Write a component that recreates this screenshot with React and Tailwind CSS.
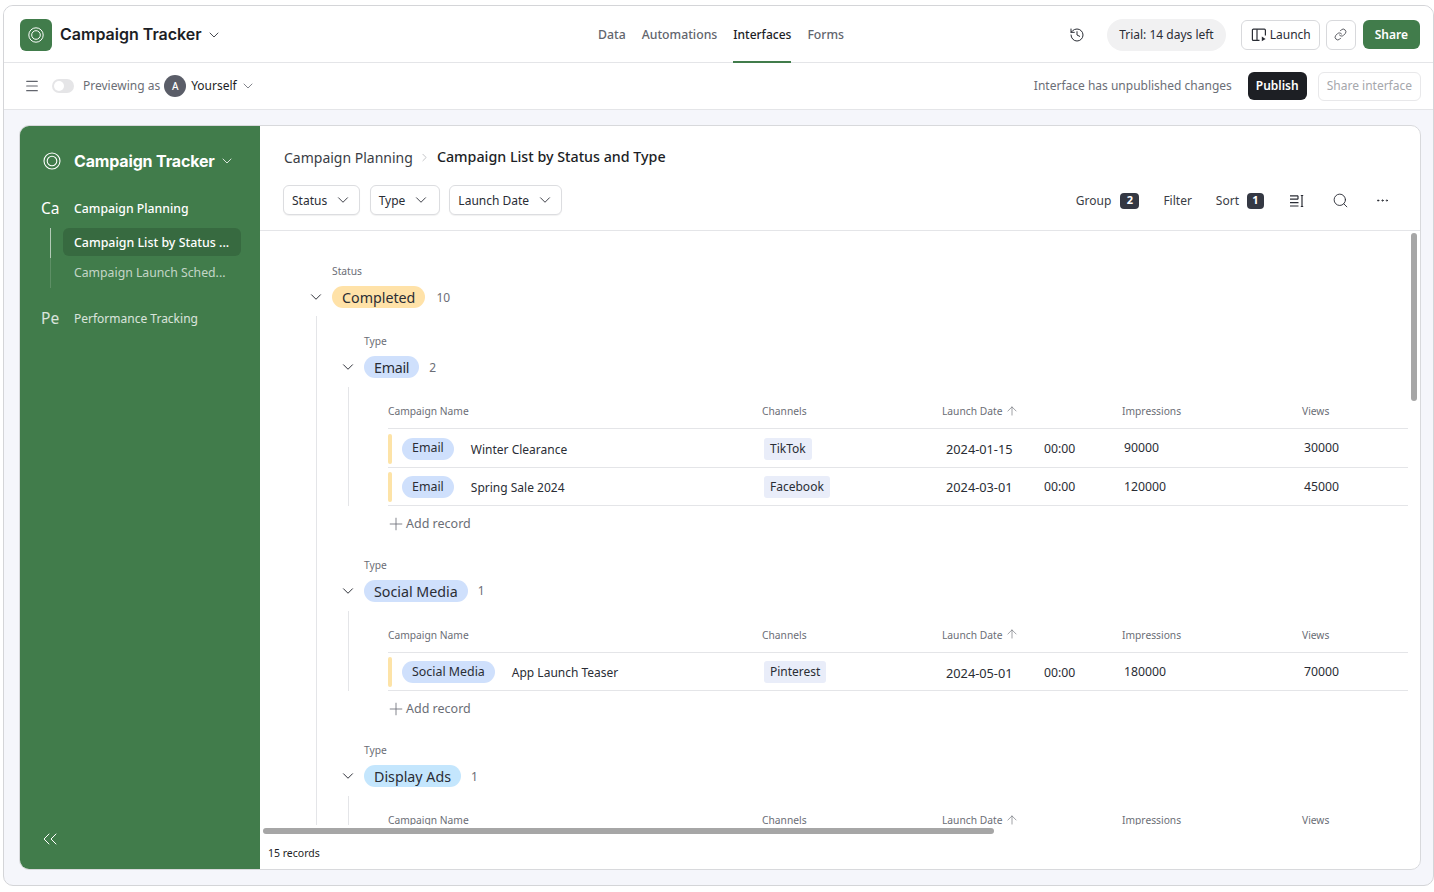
import React from 'react';
import { ChevronDown, ChevronRight, ChevronsLeft, History, Link, Menu, Search, Ellipsis, Plus, ArrowUp } from 'lucide-react';

const Logo = ({ size = 20 }) => (
  <svg width={size} height={size} viewBox="0 0 20 20" fill="none" stroke="currentColor" strokeWidth="1.1">
    <circle cx="10" cy="10" r="8" />
    <circle cx="10" cy="10" r="4.8" />
  </svg>
);

const LaunchIcon = () => (
  <svg width="16" height="16" viewBox="0 0 16 16" fill="none" stroke="currentColor" strokeWidth="1.2">
    <path d="M8.5 13.4H2.4a1 1 0 0 1-1-1V3.2a1 1 0 0 1 1-1h11a1 1 0 0 1 1 1v5.3" />
    <path d="M6 2.2v11.2" />
    <path d="M10.8 9.6l3.8 2.3-3.8 2.3z" fill="currentColor" stroke="none" />
  </svg>
);

const RowHeightIcon = () => (
  <svg width="15" height="14" viewBox="0 0 15 14" fill="none" stroke="currentColor" strokeWidth="1.2">
    <path d="M1 1.8h8M9 1.8v3.4M1 5.2h8M1 8.6h8.5M1 12h8.5" />
    <path d="M13 1.5v11M11.8 1.5h2.4M11.8 12.5h2.4" />
  </svg>
);

const FilterButton = ({ label, pad = 'pr-[7px]' }) => (
  <button className={`flex h-[30px] items-center gap-[7px] rounded-md border border-[#dcdde0] bg-white pl-2 text-[12px] text-[#2a2d35] shadow-[0_1px_1px_rgba(0,0,0,0.06)] ${pad}`}>
    <span className="pt-px">{label}</span>
    <ChevronDown size={18} strokeWidth={1.2} />
  </button>
);

const Row = ({ pill, name, channel, date, impressions, views }) => (
  <div className="flex h-[38.5px] items-center border-b border-[#e4e5e8] pt-[1.5px] text-[12px] text-[#2a2d35]">
    <div className="flex w-[374px] items-center">
      <span className="h-[30px] w-1 rounded-sm bg-[#fde3a7]" />
      <span className="ml-[10px] flex h-[22px] items-center rounded-full bg-[#cfe0fc] px-[10px] text-[12.4px]">{pill}</span>
      <span className="ml-[17px] mt-[2px]">{name}</span>
    </div>
    <div className="w-[180px] pl-[2px]">
      <span className="inline-flex h-[22px] items-center rounded-[3px] bg-[#e9edf9] px-[6px]">{channel}</span>
    </div>
    <div className="flex w-[180px] pl-1">
      <span className="mt-[2px] w-[98px] text-[12.75px]">{date}</span>
      <span className="mt-[2px] text-[12.25px]">00:00</span>
    </div>
    <div className="w-[180px] pl-[2px] text-[12.25px]">{impressions}</div>
    <div className="pl-[2px] text-[12.25px]">{views}</div>
  </div>
);

const TableHead = () => (
  <div className="flex h-[42px] items-center border-b border-[#e4e5e8] pt-[8px] text-[10.25px] text-[#6b6e76]">
    <div className="w-[374px]">Campaign Name</div>
    <div className="w-[180px]">Channels</div>
    <div className="flex w-[180px] items-center gap-[3px]">Launch Date <ArrowUp size={14} strokeWidth={1.1} className="-mt-[2px]" /></div>
    <div className="w-[180px]">Impressions</div>
    <div>Views</div>
  </div>
);

const TypeGroup = ({ type, count, color, rows }) => (
  <section>
    <div className="h-[14px] pl-[47px] text-[10.25px] leading-[14px] text-[#6b6e76]">Type</div>
    <div className="mt-2 flex h-[22px] items-center pl-[22px]">
      <ChevronDown size={18} strokeWidth={1.3} className="shrink-0 text-[#2a2d35]" />
      <span className={`ml-[7px] flex h-[22px] items-center rounded-full px-[10px] pt-px text-[14.25px] text-[#2a2d35] ${color}`}>{type}</span>
      <span className="ml-[10px] pt-px text-[12px] text-[#6b6e76]">{count}</span>
    </div>
    <div className="ml-[31px] mt-[9px] border-l border-[#e4e5e8] pl-[39px]">
      <TableHead />
      {rows.map((r) => <Row key={r.name} {...r} />)}
    </div>
    {rows.length > 0 && (
      <div className="ml-[69px] flex items-center pt-[8px] text-[12.5px] text-[#6b6e76]">
        <Plus size={20} strokeWidth={1} /> Add record
      </div>
    )}
  </section>
);

export default function App() {
  return (
    <div className="h-[892px] overflow-hidden bg-white pb-[6px] pl-[3px] pt-[5px] font-['Noto_Sans',sans-serif]">
      <div className="flex h-full flex-col overflow-hidden rounded-[10px] border border-[#d4d5d8] bg-[#f5f6fb]">
        <header className="relative flex h-[57px] shrink-0 items-center border-b border-[#e4e5e8] bg-white pl-4 pr-[13px] pt-px">
          <div className="flex h-8 w-8 items-center justify-center rounded-md bg-[#417c4b] text-white"><Logo size={18} /></div>
          <span className="ml-2 -mt-[2px] font-['Inter',sans-serif] text-[16px] font-semibold text-[#1c1e25]">Campaign Tracker</span>
          <ChevronDown size={16} strokeWidth={1.3} className="ml-[4px] text-[#2a2d35]" />
          <nav className="absolute left-[594px] top-0 flex h-[57px] items-center gap-4 pt-px text-[12.25px] font-medium text-[#62656d]">
            <span>Data</span>
            <span>Automations</span>
            <span className="flex h-full items-center border-b-2 border-[#417c4b] pt-[2px] text-[12px] text-[#1c1e25]">Interfaces</span>
            <span>Forms</span>
          </nav>
          <div className="ml-auto flex items-center">
            <History size={16} strokeWidth={1.5} className="text-[#2a2d35]" />
            <span className="ml-[22px] flex h-8 items-center rounded-full bg-[#f1f1f2] px-3 text-[12px] text-[#2a2d35]">Trial: 14 days left</span>
            <button className="ml-[15px] flex h-[30px] items-center gap-[3px] rounded-md border border-[#d8d9dc] bg-white pl-[9px] pr-[8px] text-[12px] text-[#2a2d35]"><LaunchIcon /> Launch</button>
            <button className="ml-[6px] flex h-[30px] w-[30px] items-center justify-center rounded-md border border-[#d8d9dc] bg-white text-[#2a2d35]"><Link size={13} strokeWidth={1.4} /></button>
            <button className="ml-[7px] flex h-[29px] items-center rounded-md bg-[#417c4b] px-3 text-[12px] font-semibold text-white">Share</button>
          </div>
        </header>

        <div className="flex h-[47px] shrink-0 items-center border-b border-[#e4e5e8] bg-white pl-5 pr-[12px]">
          <Menu size={16} strokeWidth={1.7} className="text-[#62656d]" />
          <span className="ml-3 flex h-[14px] w-[22px] items-center rounded-full bg-[#e5e5e7] px-[2px]"><span className="h-[10px] w-[10px] rounded-full bg-white" /></span>
          <span className="ml-[9px] text-[12px] text-[#6b6e76]">Previewing as</span>
          <span className="ml-1 flex h-[22px] w-[22px] items-center justify-center rounded-full bg-[#5a5d68] text-[10px] font-medium text-white">A</span>
          <span className="ml-[5px] text-[12px] text-[#1c1e25]">Yourself</span>
          <ChevronDown size={16} strokeWidth={1.2} className="ml-[3px] text-[#62656d]" />
          <span className="ml-auto text-[12px] text-[#6b6e76]">Interface has unpublished changes</span>
          <button className="ml-4 flex h-7 items-center rounded-md bg-[#1d1f24] px-2 text-[12px] font-semibold text-white">Publish</button>
          <button className="ml-[11px] flex h-[29px] items-center rounded-md border border-[#e8e8ea] bg-white px-2 text-[12px] text-[#a5a7ac]">Share interface</button>
        </div>

        <div className="min-h-0 flex-1 pb-[15px] pl-[15px] pr-[12px] pt-[15px]">
          <div className="flex h-full overflow-hidden rounded-[10px] border border-[#d8d9dc] bg-white">
            <aside className="flex w-[240px] shrink-0 flex-col bg-[#417c4b] text-white">
              <div className="mt-[18px] flex h-[34px] items-center pl-[22px]">
                <Logo size={20} />
                <span className="ml-[12px] font-['Inter',sans-serif] text-[16px] font-bold tracking-[-0.01em]">Campaign Tracker</span>
                <ChevronDown size={16} strokeWidth={1.2} className="ml-[4px]" />
              </div>
              <div className="mt-[15px] flex h-[30px] items-center">
                <span className="w-[54px] pl-[21px] pt-[2px] text-[15.5px]">Ca</span>
                <span className="pt-[2px] text-[12.25px] font-medium">Campaign Planning</span>
              </div>
              <div className="ml-[30px] mt-[5px] flex flex-col">
                <div className="flex h-[30px] items-center border-l border-white/60 pl-[12px]">
                  <span className="-mt-[2px] flex h-7 w-[178px] items-center rounded-md bg-[#376a40] pl-[11px] pt-[2px] text-[12.4px] font-medium">Campaign List by Status ...</span>
                </div>
                <div className="flex h-[30px] items-center border-l border-white/15 pl-[23px] text-[12.25px] text-white/70">Campaign Launch Sched...</div>
              </div>
              <div className="mt-[16px] flex h-[30px] items-center text-white/80">
                <span className="w-[54px] pl-[21px] text-[15.5px]">Pe</span>
                <span className="text-[12px]">Performance Tracking</span>
              </div>
              <ChevronsLeft size={24} strokeWidth={1} className="mb-[18px] ml-[18px] mt-auto" />
            </aside>

            <main className="relative flex min-w-0 flex-1 flex-col">
              <div className="flex h-[105px] shrink-0 flex-col border-b border-[#e4e5e8] pl-[23px] pr-[30px]">
                <div className="ml-px mt-[19px] flex h-[24px] items-center text-[14px]">
                  <span className="text-[#3a3d45]">Campaign Planning</span>
                  <ChevronRight size={13} strokeWidth={1.2} className="mx-[5.5px] text-[#a5a7ac]" />
                  <span className="text-[14.25px] font-medium text-[#1c1e25]">Campaign List by Status and Type</span>
                </div>
                <div className="mt-4 flex items-center gap-[9.5px]">
                  <FilterButton label="Status" />
                  <FilterButton label="Type" pad="pr-[8.5px]" />
                  <FilterButton label="Launch Date" />
                  <div className="ml-auto flex items-center pt-px text-[12px] text-[#3a3d45]">
                    <span>Group</span>
                    <span className="ml-[9px] flex h-4 w-[19px] items-center justify-center rounded-[4px] bg-[#343843] text-[11px] font-bold text-white">2</span>
                    <span className="ml-6">Filter</span>
                    <span className="ml-6">Sort</span>
                    <span className="ml-2 flex h-4 w-[17px] items-center justify-center rounded-[4px] bg-[#343843] text-[11px] font-bold text-white">1</span>
                    <span className="ml-[25px] text-[#2a2d35]"><RowHeightIcon /></span>
                    <Search size={17} strokeWidth={1.3} className="ml-[28px] text-[#2a2d35]" />
                    <Ellipsis size={15} strokeWidth={1.6} className="ml-[26px] text-[#2a2d35]" />
                  </div>
                </div>
              </div>

              <div className="min-h-0 flex-1 overflow-hidden pl-[47px] pr-[12px]">
                <div className="mt-[33px] h-[14px] pl-[25px] text-[10.25px] leading-[14px] text-[#6b6e76]">Status</div>
                <div className="mt-2 flex h-[22px] items-center">
                  <ChevronDown size={18} strokeWidth={1.3} className="text-[#2a2d35]" />
                  <span className="ml-[7px] flex h-[22px] items-center rounded-full bg-[#ffe2a8] px-[10px] pt-px text-[14.25px] text-[#2a2d35]">Completed</span>
                  <span className="ml-[11px] pt-px text-[12px] text-[#6b6e76]">10</span>
                </div>
                <div className="ml-[9px] mt-2 border-l border-[#e4e5e8] pt-[18px]">
                  <div className="flex flex-col gap-[23.75px]">
                    <TypeGroup type="Email" count={2} color="bg-[#cfe0fc] tracking-[-0.02em]" rows={[
                      { pill: 'Email', name: 'Winter Clearance', channel: 'TikTok', date: '2024-01-15', impressions: '90000', views: '30000' },
                      { pill: 'Email', name: 'Spring Sale 2024', channel: 'Facebook', date: '2024-03-01', impressions: '120000', views: '45000' },
                    ]} />
                    <TypeGroup type="Social Media" count={1} color="bg-[#cfe0fc]" rows={[
                      { pill: 'Social Media', name: 'App Launch Teaser', channel: 'Pinterest', date: '2024-05-01', impressions: '180000', views: '70000' },
                    ]} />
                    <TypeGroup type="Display Ads" count={1} color="bg-[#c4e6fd]" rows={[]} />
                  </div>
                </div>
              </div>

              <div className="h-[44px] shrink-0 pl-2 pt-[21px] text-[10.5px] text-[#1c1e25]">15 records</div>
              <div className="absolute bottom-[35px] left-[3px] h-[6px] w-[731px] rounded-full bg-[#a6a6a6]" />
              <div className="absolute right-[3px] top-[107px] h-[168px] w-[6px] rounded-full bg-[#a6a6a6]" />
            </main>
          </div>
        </div>
      </div>
    </div>
  );
}
